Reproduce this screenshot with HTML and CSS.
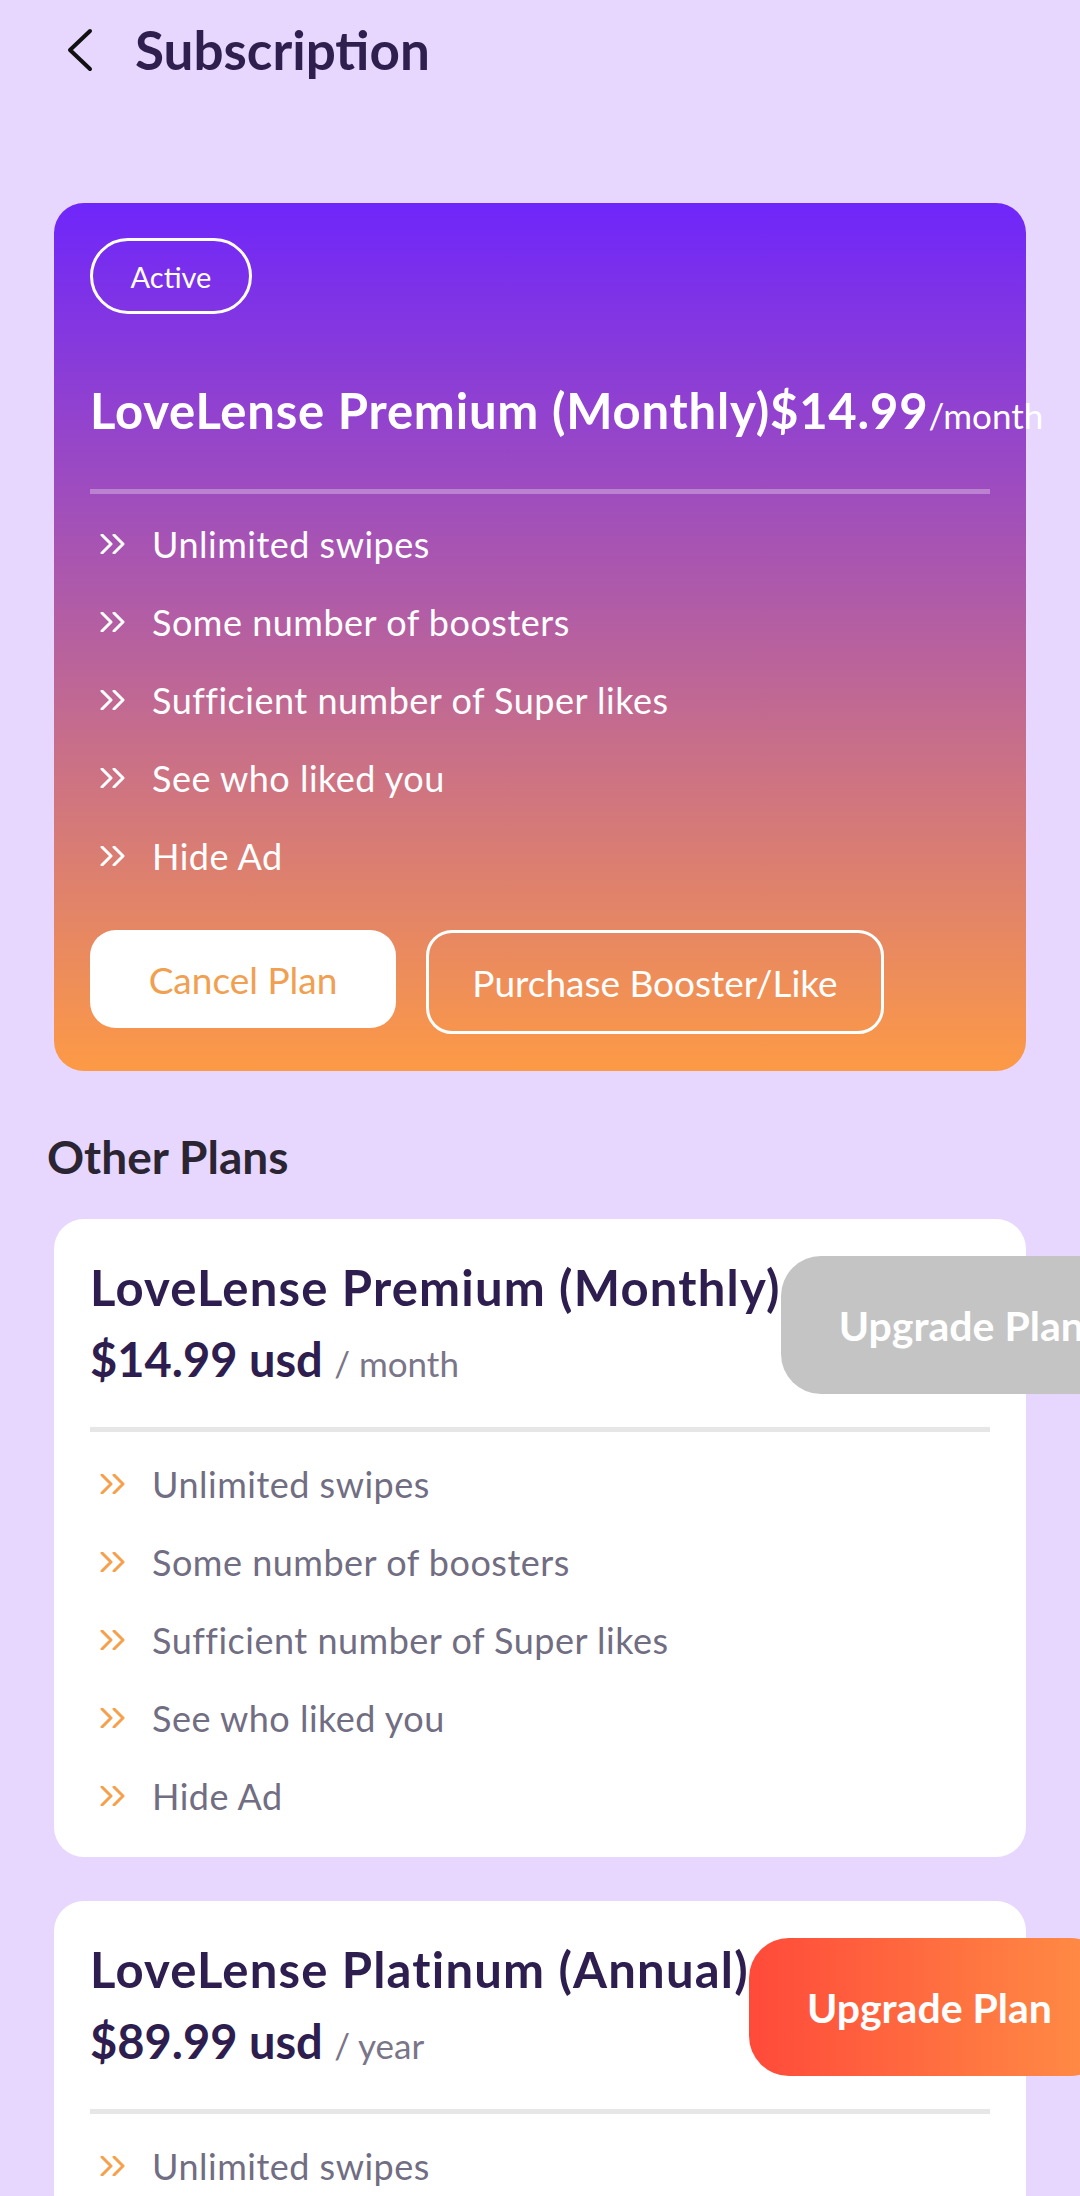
FILE: index.html
```html
<!DOCTYPE html>
<html lang="en">
<head>
    <meta charset="UTF-8">
    <meta name="viewport" content="width=device-width, initial-scale=1.0">
    <title>Subscription</title>
    <link rel="stylesheet" href="styles.css">
</head>
<body>
    <div class="header">
        <svg class="back" width="26" height="44" viewBox="0 0 26 44">
            <polyline points="23,3 3,22 23,41" fill="none" stroke="#111" stroke-width="4" stroke-linecap="round" stroke-linejoin="round"/>
        </svg>
        <h1>Subscription</h1>
    </div>

    <div class="active-card">
        <div class="pill">Active</div>
        <div class="active-title">LoveLense Premium (Monthly)$14.99<span class="per">/month</span></div>
        <div class="divider light"></div>
        <ul class="features light">
            <li><svg class="chev" viewBox="0 0 26 20"><polyline points="2,1 11,10 2,19"/><polyline points="14,1 23,10 14,19"/></svg>Unlimited swipes</li>
            <li><svg class="chev" viewBox="0 0 26 20"><polyline points="2,1 11,10 2,19"/><polyline points="14,1 23,10 14,19"/></svg>Some number of boosters</li>
            <li><svg class="chev" viewBox="0 0 26 20"><polyline points="2,1 11,10 2,19"/><polyline points="14,1 23,10 14,19"/></svg>Sufficient number of Super likes</li>
            <li><svg class="chev" viewBox="0 0 26 20"><polyline points="2,1 11,10 2,19"/><polyline points="14,1 23,10 14,19"/></svg>See who liked you</li>
            <li><svg class="chev" viewBox="0 0 26 20"><polyline points="2,1 11,10 2,19"/><polyline points="14,1 23,10 14,19"/></svg>Hide Ad</li>
        </ul>
        <div class="actions">
            <button class="btn-cancel">Cancel Plan</button>
            <button class="btn-purchase">Purchase Booster/Like</button>
        </div>
    </div>

    <h2>Other Plans</h2>

    <div class="plan-card">
        <div class="plan-top">
            <div class="plan-info">
                <div class="plan-name">LoveLense Premium (Monthly)</div>
                <div class="plan-price">$14.99 usd <span class="per">/ month</span></div>
            </div>
            <button class="btn-upgrade disabled">Upgrade Plan</button>
        </div>
        <div class="divider"></div>
        <ul class="features">
            <li><svg class="chev" viewBox="0 0 26 20"><polyline points="2,1 11,10 2,19"/><polyline points="14,1 23,10 14,19"/></svg>Unlimited swipes</li>
            <li><svg class="chev" viewBox="0 0 26 20"><polyline points="2,1 11,10 2,19"/><polyline points="14,1 23,10 14,19"/></svg>Some number of boosters</li>
            <li><svg class="chev" viewBox="0 0 26 20"><polyline points="2,1 11,10 2,19"/><polyline points="14,1 23,10 14,19"/></svg>Sufficient number of Super likes</li>
            <li><svg class="chev" viewBox="0 0 26 20"><polyline points="2,1 11,10 2,19"/><polyline points="14,1 23,10 14,19"/></svg>See who liked you</li>
            <li><svg class="chev" viewBox="0 0 26 20"><polyline points="2,1 11,10 2,19"/><polyline points="14,1 23,10 14,19"/></svg>Hide Ad</li>
        </ul>
    </div>

    <div class="plan-card">
        <div class="plan-top">
            <div class="plan-info">
                <div class="plan-name">LoveLense Platinum (Annual)</div>
                <div class="plan-price">$89.99 usd <span class="per">/ year</span></div>
            </div>
            <button class="btn-upgrade">Upgrade Plan</button>
        </div>
        <div class="divider"></div>
        <ul class="features">
            <li><svg class="chev" viewBox="0 0 26 20"><polyline points="2,1 11,10 2,19"/><polyline points="14,1 23,10 14,19"/></svg>Unlimited swipes</li>
            <li><svg class="chev" viewBox="0 0 26 20"><polyline points="2,1 11,10 2,19"/><polyline points="14,1 23,10 14,19"/></svg>Some number of boosters</li>
            <li><svg class="chev" viewBox="0 0 26 20"><polyline points="2,1 11,10 2,19"/><polyline points="14,1 23,10 14,19"/></svg>Sufficient number of Super likes</li>
        </ul>
    </div>
</body>
</html>
```

FILE: styles.css
```css
body, html {
    margin: 0;
    padding: 0;
    height: 100%;
    overflow: hidden;
}
body {
    background-color: #e7d7fe;
    font-family: Lato, "Noto Sans", sans-serif;
}
.header {
    display: flex;
    align-items: center;
    gap: 42px;
    padding: 18px 0 0 67px;
}
.back {
    display: block;
}
h1 {
    margin: 0;
    font-size: 53px;
    line-height: 64px;
    font-weight: 700;
    color: #2f1f4e;
}
.active-card {
    margin: 121px 54px 0;
    padding: 35px 36px 37px;
    border-radius: 30px;
    background: linear-gradient(180deg, #6f26fa 0%, #fd9a46 100%);
    color: white;
}
.pill {
    box-sizing: border-box;
    width: 162px;
    height: 76px;
    border: 3px solid white;
    border-radius: 38px;
    display: flex;
    align-items: center;
    justify-content: center;
    font-size: 29px;
}
.active-title {
    margin-top: 68px;
    font-size: 49px;
    line-height: 56px;
    font-weight: 700;
    letter-spacing: 0.8px;
    white-space: nowrap;
}
.active-title .per {
    font-size: 35px;
    font-weight: 400;
    letter-spacing: 0;
}
.divider {
    height: 5px;
    background-color: #e6e6e6;
    margin-top: 28px;
}
.divider.light {
    margin-top: 46px;
    background-color: rgba(255, 255, 255, 0.3);
}
.features {
    list-style: none;
    margin: 13px 0 0;
    padding: 0;
    color: #716d82;
}
.features.light {
    margin-top: 11px;
    color: white;
}
.features li {
    display: flex;
    align-items: center;
    gap: 26px;
    height: 78px;
    font-size: 36px;
    letter-spacing: 0.5px;
    padding-left: 10px;
}
.chev {
    width: 26px;
    height: 20px;
    flex-shrink: 0;
    fill: none;
    stroke: #f7a04b;
    stroke-width: 3;
    stroke-linecap: round;
    stroke-linejoin: round;
}
.light .chev {
    stroke: white;
}
.actions {
    display: flex;
    align-items: flex-start;
    gap: 30px;
    margin-top: 35px;
}
button {
    font-family: inherit;
    border: none;
    cursor: pointer;
}
.btn-cancel {
    width: 306px;
    height: 98px;
    border-radius: 26px;
    background-color: white;
    color: #f0a050;
    font-size: 37px;
}
.btn-purchase {
    box-sizing: border-box;
    width: 458px;
    height: 104px;
    border: 3px solid white;
    border-radius: 26px;
    background: transparent;
    color: white;
    font-size: 37px;
}
h2 {
    margin: 58px 0 0 47px;
    font-size: 46px;
    line-height: 56px;
    font-weight: 700;
    color: #2b2533;
}
.plan-card {
    margin: 34px 54px 44px;
    padding: 32px 36px 22px;
    border-radius: 30px;
    background-color: white;
}
.plan-top {
    display: flex;
    align-items: center;
}
.plan-info {
    white-space: nowrap;
    color: #2e1e4f;
    font-weight: 700;
    font-size: 47px;
    line-height: 72px;
}
.plan-name {
    font-size: 49px;
    letter-spacing: 1.2px;
}
.plan-price .per {
    font-size: 35px;
    font-weight: 400;
    color: #7a7589;
}
.btn-upgrade {
    flex-shrink: 0;
    width: 361px;
    height: 138px;
    padding: 0 0 0 58px;
    text-align: left;
    border-radius: 40px;
    background: linear-gradient(90deg, #ff4a3a 0%, #ff8f45 100%);
    color: white;
    font-size: 41px;
    font-weight: 700;
}
.btn-upgrade.disabled {
    background: #c4c4c4;
}
```
